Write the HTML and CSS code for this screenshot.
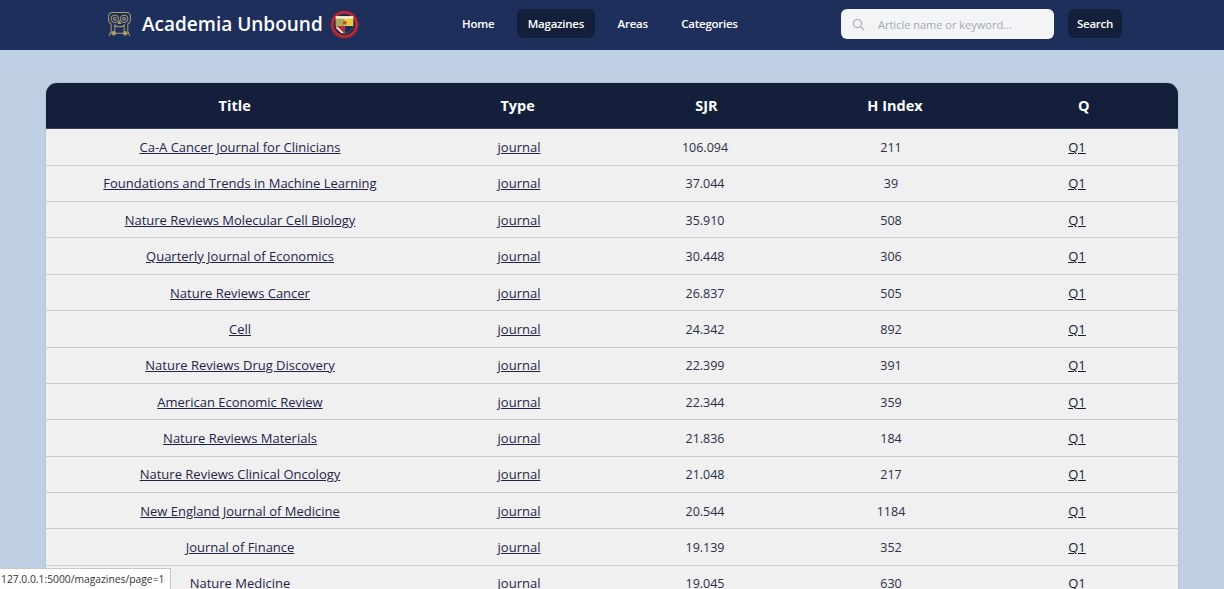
FILE: index.html
```html
<!DOCTYPE html>
<html lang="en">
<head>
<meta charset="utf-8">
<title>Academia Unbound</title>
<link rel="stylesheet" href="styles.css">
</head>
<body>
<header class="topbar">
  <a class="brand" href="#">
    <svg class="owl" viewBox="0 0 24 26" fill="none" stroke="#a89a6c" stroke-width="1">
      <path d="M5 1.500h14a3.500 3.500 0 0 1 3.500 3.500v4a4 4 0 0 1-2.500 3.500v7l2 4.500M5 1.500A3.500 3.500 0 0 0 1.500 5v4A4 4 0 0 0 4 12.500v7l-2 4.500"/>
      <circle cx="7.500" cy="7.500" r="3.500"/><circle cx="16.500" cy="7.500" r="3.500"/>
      <circle cx="7.500" cy="7.500" r="1.300"/><circle cx="16.500" cy="7.500" r="1.300"/>
      <path d="M12 9.500l-1.200 2.500h2.400zM7 13c1.500 3 8.500 3 10 0M7.500 14v6M16.500 14v6M3 21.500h18"/>
      <circle cx="6.500" cy="21.500" r="1.700" fill="#b8a468"/><circle cx="17.500" cy="21.500" r="1.700" fill="#b8a468"/>
    </svg>
    <span class="brand-name">Academia Unbound</span>
    <svg class="crest" viewBox="0 0 30 30">
      <circle cx="15" cy="15" r="14.500" fill="#a81f30"/>
      <circle cx="15" cy="15" r="12.200" fill="none" stroke="#d9a0a0" stroke-width=".6" stroke-dasharray="1 1"/>
      <circle cx="15" cy="15" r="11" fill="#2a2440"/>
      <path d="M6 6.500h18v10c0 4-4.500 6.500-9 8.500-4.500-2-9-4.500-9-8.500z" fill="#e4d67c"/>
      <path d="M6 6.500h18v2.500H6z" fill="#f5f2dc"/>
      <path d="M6 9h9v7.500H6z" fill="#a9ad62"/>
      <path d="M15 9h9v7.500h-9z" fill="#e6cb45"/>
      <rect x="13.500" y="11.500" width="3.500" height="3.500" fill="#c9452f"/>
      <path d="M6 16.500h9v8.500c-4.500-2-9-4.500-9-8.500z" fill="#b52d2d"/>
      <path d="M7 16.500l7 7-2 .500-5.500-5.500z" fill="#f6f6f2"/>
      <path d="M15 16.500h9c0 4-4.500 6.500-9 8.500z" fill="#1f2f5c"/>
    </svg>
  </a>
  <nav class="nav">
    <a class="nav-link" href="#">Home</a>
    <a class="nav-link active" href="#">Magazines</a>
    <a class="nav-link" href="#">Areas</a>
    <a class="nav-link" href="#">Categories</a>
  </nav>
  <form class="search">
    <label class="search-box">
      <svg class="search-icon" viewBox="0 0 16 16" fill="none" stroke="#9ca3af" stroke-width="1.300"><circle cx="6.800" cy="6.800" r="5"/><path d="M10.500 10.500L15 15"/></svg>
      <input class="search-input" type="text" placeholder="Article name or keyword...">
    </label>
    <button class="search-btn" type="button">Search</button>
  </form>
</header>
<main class="content">
  <section class="table">
    <div class="head">
      <div>Title</div><div>Type</div><div>SJR</div><div>H Index</div><div>Q</div>
    </div>
    <div class="row"><a href="#">Ca-A Cancer Journal for Clinicians</a><a href="#">journal</a><span>106.094</span><span>211</span><a href="#">Q1</a></div>
    <div class="row"><a href="#">Foundations and Trends in Machine Learning</a><a href="#">journal</a><span>37.044</span><span>39</span><a href="#">Q1</a></div>
    <div class="row"><a href="#">Nature Reviews Molecular Cell Biology</a><a href="#">journal</a><span>35.910</span><span>508</span><a href="#">Q1</a></div>
    <div class="row"><a href="#">Quarterly Journal of Economics</a><a href="#">journal</a><span>30.448</span><span>306</span><a href="#">Q1</a></div>
    <div class="row"><a href="#">Nature Reviews Cancer</a><a href="#">journal</a><span>26.837</span><span>505</span><a href="#">Q1</a></div>
    <div class="row"><a href="#">Cell</a><a href="#">journal</a><span>24.342</span><span>892</span><a href="#">Q1</a></div>
    <div class="row"><a href="#">Nature Reviews Drug Discovery</a><a href="#">journal</a><span>22.399</span><span>391</span><a href="#">Q1</a></div>
    <div class="row"><a href="#">American Economic Review</a><a href="#">journal</a><span>22.344</span><span>359</span><a href="#">Q1</a></div>
    <div class="row"><a href="#">Nature Reviews Materials</a><a href="#">journal</a><span>21.836</span><span>184</span><a href="#">Q1</a></div>
    <div class="row"><a href="#">Nature Reviews Clinical Oncology</a><a href="#">journal</a><span>21.048</span><span>217</span><a href="#">Q1</a></div>
    <div class="row"><a href="#">New England Journal of Medicine</a><a href="#">journal</a><span>20.544</span><span>1184</span><a href="#">Q1</a></div>
    <div class="row"><a href="#">Journal of Finance</a><a href="#">journal</a><span>19.139</span><span>352</span><a href="#">Q1</a></div>
    <div class="row"><a href="#">Nature Medicine</a><a href="#">journal</a><span>19.045</span><span>630</span><a href="#">Q1</a></div>
  </section>
</main>
<div class="status">127.0.0.1:5000/magazines/page=1</div>
</body>
</html>
```
FILE: styles.css
```css
* { box-sizing: border-box; }
html, body { height: 100%; overflow: hidden; }
body {
  margin: 0;
  background: #bfcfe4;
  font-family: "Open Sans", "Noto Sans", sans-serif;
  font-size: 13px;
  color: #2a2f45;
}
a { color: inherit; }

.topbar {
  height: 50px;
  background: #1f2f5c;
  display: flex;
  align-items: center;
  padding: 0 0 2px 107px;
}
.brand {
  display: flex;
  align-items: center;
  width: 344px;
  text-decoration: none;
  color: #fff;
}
.owl { width: 25px; height: 27px; }
.brand-name {
  margin-left: 10px;
  font-size: 19px;
  font-weight: 600;
  white-space: nowrap;
}
.crest { width: 29px; height: 29px; margin-left: 7px; }

.nav { display: flex; gap: 11.5px; width: 390px; margin-bottom: 1px; }
.nav-link {
  height: 29px;
  padding: 0 11px;
  border-radius: 6px;
  display: flex;
  align-items: center;
  color: #fff;
  font-size: 11.5px;
  letter-spacing: -.25px;
  font-weight: 600;
  text-decoration: none;
}
.nav-link.active { background: #141f3b; }

.search { display: flex; align-items: center; gap: 14px; }
.search-box {
  width: 213px;
  height: 30px;
  background: #f3f4f6;
  border-radius: 6px;
  display: flex;
  align-items: center;
  padding-left: 11px;
}
.search-icon { width: 13px; height: 13px; flex: none; }
.search-input {
  flex: 1;
  min-width: 0;
  margin-left: 12px;
  padding: 0 1px;
  border: 0;
  background: transparent;
  font: 11px "Open Sans", sans-serif;
  outline: none;
}
.search-input::placeholder { color: #a3a8b2; opacity: 1; }
.search-btn {
  width: 54px;
  height: 29px;
  margin-bottom: 1px;
  border: 0;
  padding: 0;
  border-radius: 6px;
  background: #141f3b;
  color: #fff;
  font: 600 11.5px "Open Sans", sans-serif;
  letter-spacing: -.25px;
}

.content { padding: 33px 46px 0; }
.table {
  border-radius: 11px 11px 0 0;
  overflow: hidden;
  background: #f0f0f1;
  box-shadow: 0 0 1px rgba(20, 31, 59, .6);
}
.head {
  display: grid;
  grid-template-columns: 2fr 1fr 1fr 1fr 1fr;
  height: 46.4px;
  padding-bottom: 1px;
  align-items: center;
  text-align: center;
  background: #141f3b;
  color: #fff;
  font-size: 14.5px;
  font-weight: 700;
  border-bottom: 1px solid #3c4660;
}
.row {
  display: grid;
  grid-template-columns: 2fr 1fr 1fr 1fr 1fr;
  height: 36.36px;
  padding: 0 8px;
  align-items: center;
  text-align: center;
  border-bottom: 1px solid #cdcdd0;
}
.row a { justify-self: center; color: #1f2547; }
.row a:last-child { color: #14182e; }
.row span { font-size: 12.5px; padding-top: 1px; }

.status {
  position: fixed;
  left: 0;
  bottom: 0;
  width: 171px;
  height: 21px;
  padding-left: 1px;
  background: #fff;
  border: 1px solid #c8c8c8;
  border-width: 1px 1px 0 0;
  color: #333;
  font-size: 10.300px;
  line-height: 21px;
  white-space: nowrap;
}
```
